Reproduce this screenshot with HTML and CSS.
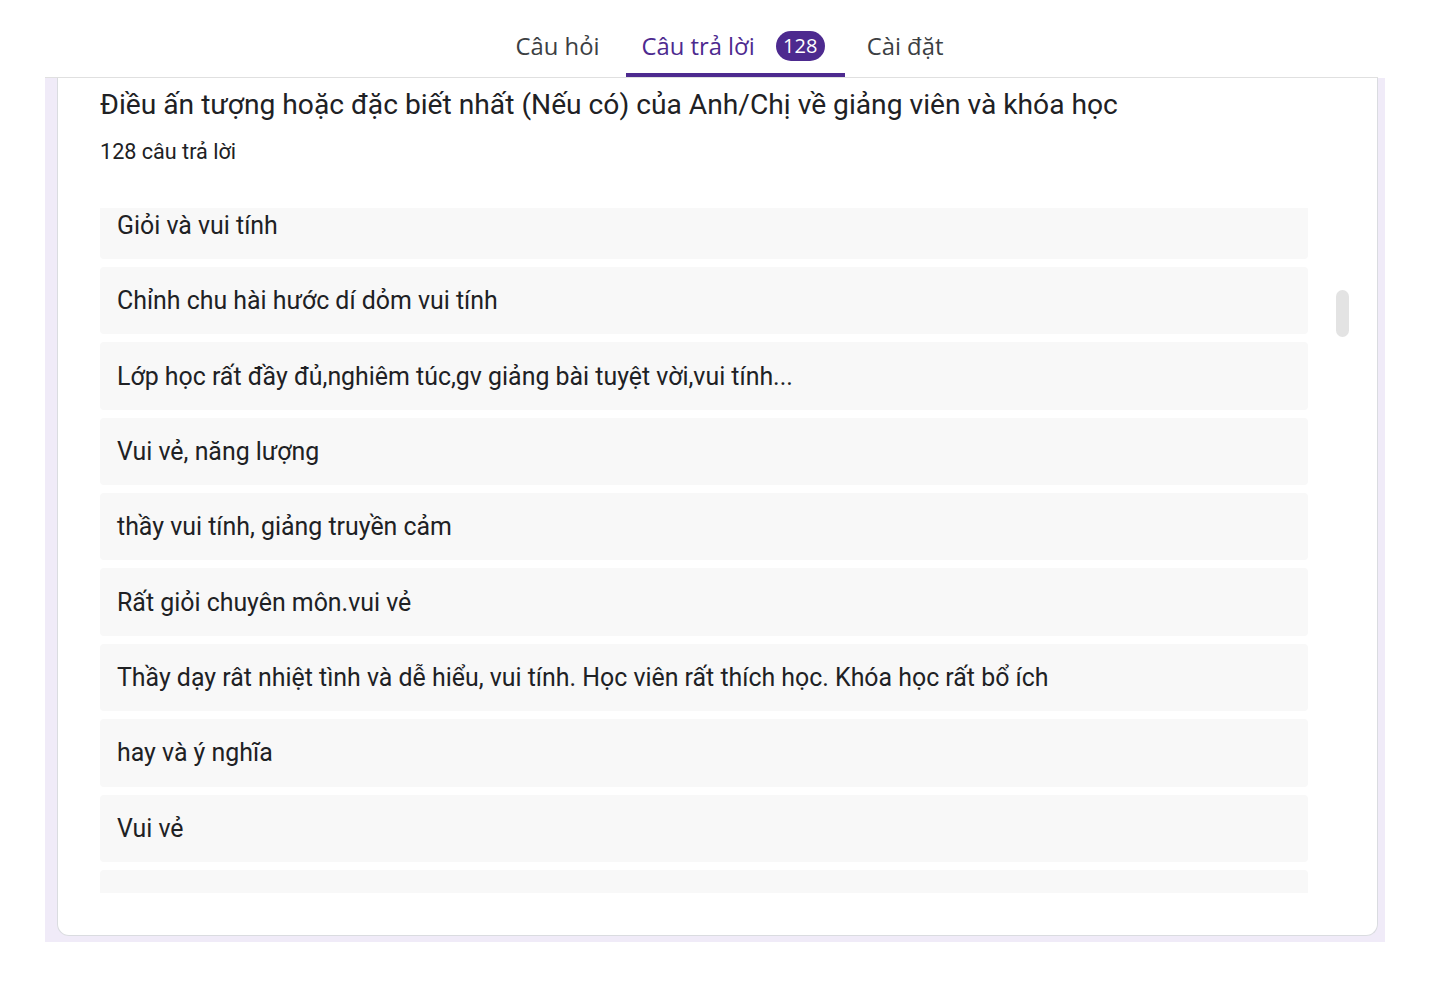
FILE: index.html
```html
<!DOCTYPE html>
<html lang="vi">
<head>
<meta charset="utf-8">
<title>Câu trả lời</title>
<link rel="stylesheet" href="styles.css">
</head>
<body>
<div class="page">
  <nav class="tabs">
    <div class="tab first">Câu hỏi</div>
    <div class="tab active">Câu trả lời <span class="badge">128</span></div>
    <div class="tab last">Cài đặt</div>
  </nav>
  <div class="panel">
    <section class="card">
      <h1 class="title">Điều ấn tượng hoặc đặc biết nhất (Nếu có) của Anh/Chị về giảng viên và khóa học</h1>
      <div class="count">128 câu trả lời</div>
      <div class="list-wrap">
        <div class="list">
          <div class="item">Giỏi và vui tính</div>
          <div class="item">Chỉnh chu hài hước dí dỏm vui tính</div>
          <div class="item">Lớp học rất đầy đủ,nghiêm túc,gv giảng bài tuyệt vời,vui tính...</div>
          <div class="item">Vui vẻ, năng lượng</div>
          <div class="item">thầy vui tính, giảng truyền cảm</div>
          <div class="item">Rất giỏi chuyên môn.vui vẻ</div>
          <div class="item">Thầy dạy rât nhiệt tình và dễ hiểu, vui tính. Học viên rất thích học. Khóa học rất bổ ích</div>
          <div class="item">hay và ý nghĩa</div>
          <div class="item">Vui vẻ</div>
          <div class="item">Nhiệt tình, chu đáo</div>
        </div>
        <div class="thumb"></div>
      </div>
    </section>
  </div>
</div>
</body>
</html>
```

FILE: styles.css
```css
html, body {
  margin: 0;
  padding: 0;
  background: #ffffff;
}

body {
  font-family: Roboto, "Liberation Sans", Arial, sans-serif;
  color: #202124;
}

.page {
  margin: 0 67px 0 45px;
}

.tabs {
  height: 77px;
  display: flex;
  justify-content: center;
  align-items: stretch;
  padding-left: 36px;
  margin-right: 7px;
  border-bottom: 1px solid #e0e0e0;
}

.tab {
  display: flex;
  align-items: center;
  padding: 18px 16px 0;
  font-family: "Open Sans", Roboto, sans-serif;
  font-size: 23.8px;
  font-weight: 500;
  color: #3c4043;
  box-sizing: border-box;
  border-bottom: 4px solid transparent;
}

.tab.first {
  margin-right: 10px;
}

.tab.last {
  margin-left: 6px;
}

.tab.active {
  color: #4d2a8f;
  padding-right: 20px;
  border-bottom: 4px solid #4d2a8f;
  border-radius: 4px 4px 0 0;
}

.badge {
  display: inline-flex;
  align-items: center;
  justify-content: center;
  width: 49px;
  height: 30px;
  margin-left: 21px;
  border-radius: 15px;
  background: #4d2a8f;
  color: #ffffff;
  font-size: 20px;
  font-weight: 500;
}

.panel {
  background: #f0ebf8;
  height: 864px;
  padding: 0 7px 0 12px;
  box-sizing: border-box;
}

.card {
  background: #ffffff;
  height: 858px;
  box-sizing: border-box;
  border: 1px solid #dadce0;
  border-top: none;
  border-radius: 0 0 12px 12px;
  padding: 0 0 0 42px;
}

.title {
  margin: 0;
  padding-top: 10px;
  font-size: 28.2px;
  font-weight: 400;
  line-height: 34px;
  color: #202124;
}

.count {
  margin-top: 17px;
  font-size: 21.6px;
  line-height: 26px;
  color: #202124;
}

.list-wrap {
  position: relative;
  margin-top: 43px;
  height: 685px;
  width: 1252px;
  overflow: hidden;
}

.list {
  display: flex;
  flex-direction: column;
  gap: 8px;
  width: 1208px;
  margin-top: -16.4px;
}

.item {
  height: 67.375px;
  flex: 0 0 auto;
  display: flex;
  align-items: center;
  padding-left: 17px;
  background: #f8f8f8;
  border-radius: 4px;
  font-size: 24.9px;
  color: #202124;
}

.thumb {
  position: absolute;
  left: 1236px;
  top: 82px;
  width: 13px;
  height: 47px;
  border-radius: 7px;
  background: #e3e3e3;
}
```
